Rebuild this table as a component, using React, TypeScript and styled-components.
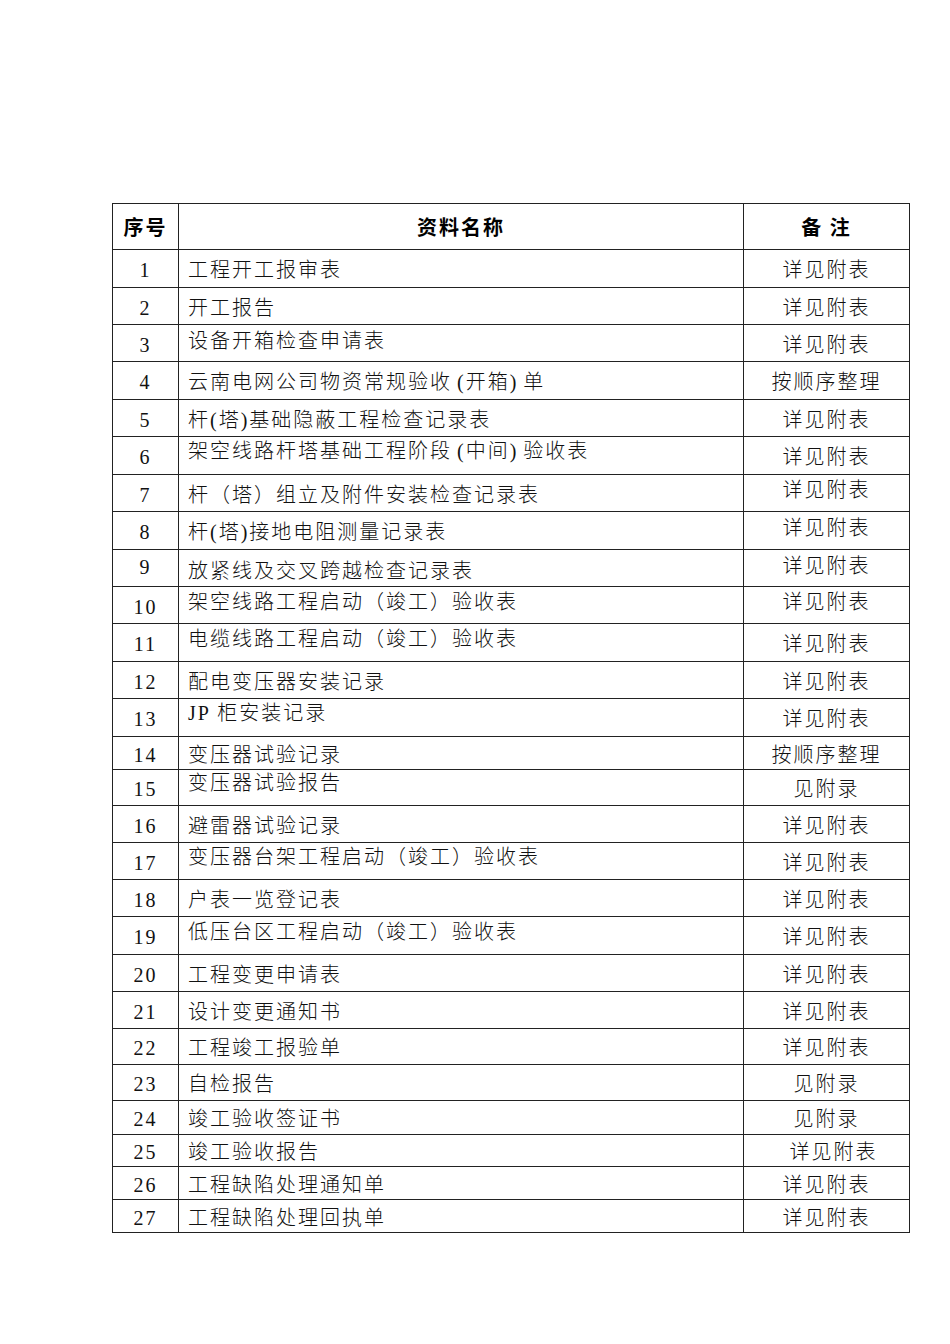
import styled, { createGlobalStyle } from "styled-components";

const GlobalStyle = createGlobalStyle`
  html, body {
    margin: 0;
    padding: 0;
    background: #ffffff;
  }
`;

const Page = styled.div`
  width: 950px;
  min-height: 1344px;
  padding: 203px 0 0 112px;
  box-sizing: border-box;
  font-family: "Liberation Serif", "Noto Sans CJK SC", serif;
  color: #111;
`;

const Table = styled.table`
  border-collapse: collapse;
  table-layout: fixed;
  width: 797px;
  border: 1px solid #222;
`;

const Row = styled.tr<{ $h: number }>`
  height: ${(p) => p.$h}px;
`;

const HeadCell = styled.th`
  border: 1px solid #222;
  padding: 0;
  font-family: "Noto Sans CJK SC", sans-serif;
  font-weight: 700;
  font-size: 20px;
  letter-spacing: 2px;
  text-align: center;
  vertical-align: middle;
  color: #000;
`;

const Cell = styled.td<{ $shift?: number; $align?: "left" | "center"; $indent?: number }>`
  border: 1px solid #222;
  padding-top: ${(p) => 6 + (p.$shift ?? 0)}px;
  padding-bottom: ${(p) => 3 - (p.$shift ?? 0)}px;
  padding-left: ${(p) => p.$indent ?? 0}px;
  padding-right: 0;
  font-size: 20px;
  font-weight: 300;
  line-height: 20px;
  letter-spacing: 2px;
  text-align: ${(p) => p.$align ?? "center"};
  vertical-align: middle;
  white-space: nowrap;
`;

const OpenParen = styled.span`
  margin-left: 5px;
`;

const CloseParen = styled.span`
  margin-right: 5px;
`;

type Item = {
  no: number;
  name: React.ReactNode;
  remark: string;
  h: number;
  noShift?: number;
  nameShift?: number;
  remShift?: number;
  remIndent?: number;
};

const items: Item[] = [
  { no: 1, name: "工程开工报审表", remark: "详见附表", h: 38 },
  { no: 2, name: "开工报告", remark: "详见附表", h: 37 },
  { no: 3, name: "设备开箱检查申请表", remark: "详见附表", h: 37, nameShift: -4 },
  {
    no: 4,
    name: (
      <>
        云南电网公司物资常规验收<OpenParen>(</OpenParen>开箱<CloseParen>)</CloseParen>单
      </>
    ),
    remark: "按顺序整理",
    h: 38,
  },
  { no: 5, name: "杆(塔)基础隐蔽工程检查记录表", remark: "详见附表", h: 37 },
  {
    no: 6,
    name: (
      <>
        架空线路杆塔基础工程阶段<OpenParen>(</OpenParen>中间<CloseParen>)</CloseParen>验收表
      </>
    ),
    remark: "详见附表",
    h: 38,
    nameShift: -6,
  },
  { no: 7, name: "杆（塔）组立及附件安装检查记录表", remark: "详见附表", h: 37, remShift: -5 },
  { no: 8, name: "杆(塔)接地电阻测量记录表", remark: "详见附表", h: 38, remShift: -4 },
  { no: 9, name: "放紧线及交叉跨越检查记录表", remark: "详见附表", h: 37, noShift: -3, nameShift: 1, remShift: -4 },
  { no: 10, name: "架空线路工程启动（竣工）验收表", remark: "详见附表", h: 37, nameShift: -5, remShift: -5 },
  { no: 11, name: "电缆线路工程启动（竣工）验收表", remark: "详见附表", h: 38, nameShift: -5 },
  { no: 12, name: "配电变压器安装记录", remark: "详见附表", h: 37 },
  { no: 13, name: "JP 柜安装记录", remark: "详见附表", h: 38, nameShift: -6 },
  { no: 14, name: "变压器试验记录", remark: "按顺序整理", h: 33 },
  { no: 15, name: "变压器试验报告", remark: "见附录", h: 36, nameShift: -6 },
  { no: 16, name: "避雷器试验记录", remark: "详见附表", h: 37 },
  { no: 17, name: "变压器台架工程启动（竣工）验收表", remark: "详见附表", h: 37, nameShift: -6 },
  { no: 18, name: "户表一览登记表", remark: "详见附表", h: 37 },
  { no: 19, name: "低压台区工程启动（竣工）验收表", remark: "详见附表", h: 38, nameShift: -5 },
  { no: 20, name: "工程变更申请表", remark: "详见附表", h: 37 },
  { no: 21, name: "设计变更通知书", remark: "详见附表", h: 37 },
  { no: 22, name: "工程竣工报验单", remark: "详见附表", h: 36 },
  { no: 23, name: "自检报告", remark: "见附录", h: 36 },
  { no: 24, name: "竣工验收签证书", remark: "见附录", h: 34 },
  { no: 25, name: "竣工验收报告", remark: "详见附表", h: 32, remIndent: 14 },
  { no: 26, name: "工程缺陷处理通知单", remark: "详见附表", h: 33 },
  { no: 27, name: "工程缺陷处理回执单", remark: "详见附表", h: 33 },
];

const App = () => {
  return (
    <Page>
      <GlobalStyle />
      <Table>
        <colgroup>
          <col style={{ width: 66 }} />
          <col style={{ width: 565 }} />
          <col style={{ width: 166 }} />
        </colgroup>
        <thead>
          <Row $h={46}>
            <HeadCell>序号</HeadCell>
            <HeadCell>资料名称</HeadCell>
            <HeadCell>备 注</HeadCell>
          </Row>
        </thead>
        <tbody>
          {items.map((it) => (
            <Row key={it.no} $h={it.h}>
              <Cell $shift={it.noShift}>{it.no}</Cell>
              <Cell $align="left" $indent={9} $shift={it.nameShift}>
                {it.name}
              </Cell>
              <Cell $shift={it.remShift} $indent={it.remIndent}>
                {it.remark}
              </Cell>
            </Row>
          ))}
        </tbody>
      </Table>
    </Page>
  );
};

export default App;
